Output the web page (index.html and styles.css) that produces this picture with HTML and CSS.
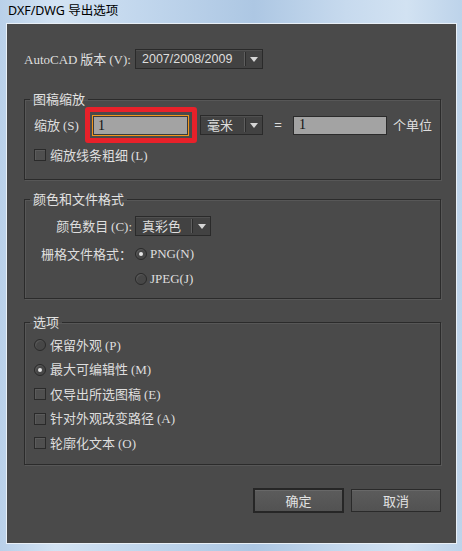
FILE: index.html
```html
<!DOCTYPE html>
<html lang="zh-CN">
<head>
<meta charset="utf-8">
<title>DXF/DWG 导出选项</title>
<link rel="stylesheet" href="styles.css">
</head>
<body>
<div class="window">
  <div class="titlebar">DXF/DWG 导出选项</div>
  <div class="frame">
    <div class="panel">
      <div class="ver-row">
        <span class="ver-label"><span class="lat">AutoCAD</span> 版本 <span class="lat">(V):</span></span>
        <div class="select w-ver"><span class="val val-ver">2007/2008/2009</span><span class="arrow"></span></div>
      </div>

      <fieldset class="group g1">
        <legend>图稿缩放</legend>
        <div class="scale-row">
          <span class="lbl-scale">缩放 <span class="lat">(S)</span></span>
          <span class="hl"><span class="input in-scale">1</span></span>
          <div class="select w-unit"><span class="val">毫米</span><span class="arrow"></span></div>
          <span class="eq">=</span>
          <span class="input in-unit">1</span>
          <span class="suffix">个单位</span>
        </div>
        <div class="opt-row first-check"><span class="box"></span><span>缩放线条粗细 <span class="lat">(L)</span></span></div>
      </fieldset>

      <fieldset class="group g2">
        <legend>颜色和文件格式</legend>
        <div class="fmt-grid">
          <span class="glabel">颜色数目 <span class="lat">(C):</span></span>
          <div class="gctl"><div class="select w-color"><span class="val">真彩色</span><span class="arrow"></span></div></div>
          <span class="glabel">栅格文件格式：</span>
          <div class="gctl"><span class="radio on"></span><span class="lat">PNG(N)</span></div>
          <span class="glabel"></span>
          <div class="gctl"><span class="radio"></span><span class="lat">JPEG(J)</span></div>
        </div>
      </fieldset>

      <fieldset class="group g3">
        <legend>选项</legend>
        <div class="opt-row"><span class="radio"></span><span>保留外观 <span class="lat">(P)</span></span></div>
        <div class="opt-row"><span class="radio on"></span><span>最大可编辑性 <span class="lat">(M)</span></span></div>
        <div class="opt-row"><span class="box"></span><span>仅导出所选图稿 <span class="lat">(E)</span></span></div>
        <div class="opt-row"><span class="box"></span><span>针对外观改变路径 <span class="lat">(A)</span></span></div>
        <div class="opt-row"><span class="box"></span><span>轮廓化文本 <span class="lat">(O)</span></span></div>
      </fieldset>

      <div class="buttons">
        <span class="btn btn-default">确定</span>
        <span class="btn">取消</span>
      </div>
    </div>
  </div>
</div>
</body>
</html>
```

FILE: styles.css
```css
* { box-sizing: border-box; }
html, body { margin: 0; padding: 0; }
body { font-family: "Noto Sans CJK SC", sans-serif; background: #c3d7ed; }

.window {
  width: 462px;
  height: 551px;
  display: flex;
  flex-direction: column;
  background: linear-gradient(90deg, #b9d0e9 0%, #d3e3f3 12%, #c2d7ed 30%, #adc7e3 55%, #c7daee 75%, #d2e2f2 88%, #bdd3ea 100%);
}

.titlebar {
  height: 23px;
  padding-left: 8px;
  font-family: "Noto Sans", "Noto Sans CJK SC", sans-serif;
  font-size: 12.5px;
  line-height: 22px;
  color: #000;
}

.frame {
  flex: 1;
  display: flex;
  padding: 0 5px 7px 6px;
}

.panel {
  flex: 1;
  background: #4a4a4a;
  border: 1px solid #e9f0f7;
  padding: 25px 15px 0 17px;
  color: #dedede;
  font-size: 13px;
  line-height: 16px;
}

.lat {
  font-family: "Liberation Serif", serif;
  font-size: 13px;
  letter-spacing: 0;
}

/* version row */
.ver-row {
  display: flex;
  align-items: center;
  height: 20px;
}
.ver-label { width: 111px; white-space: nowrap; }

/* select */
.select {
  display: flex;
  align-items: center;
  height: 20px;
  border: 1px solid #2a2a2a;
  background: #424242;
  box-shadow: inset 0 1px 0 #505050;
  color: #dedede;
}
.select .val {
  flex: 1;
  padding-left: 6px;
  white-space: nowrap;
}
.val-ver {
  font-family: "Liberation Sans", sans-serif;
  font-size: 12.5px;
}
.arrow {
  width: 17px;
  height: 14px;
  border-left: 1px solid #2c2c2c;
  box-shadow: -1px 0 0 #5e5e5e;
  display: flex;
  align-items: center;
  justify-content: center;
}
.arrow::after {
  content: "";
  border-left: 4px solid transparent;
  border-right: 4px solid transparent;
  border-top: 5px solid #d6d6d6;
}
.w-ver { width: 128px; }
.w-unit { width: 63px; margin-left: 3px; }
.w-color { width: 76px; }
.w-color .arrow { width: 18px; }

/* groups */
.group {
  margin: 0;
  min-width: 0;
  border: 1px solid #2b2b2b;
  box-shadow: 1px 1px 0 #575757, inset 1px 1px 0 #575757;
  padding: 0 0 0 9px;
  width: 417px;
}
.group legend {
  padding: 0 3px;
  margin-left: -4px;
  line-height: 16px;
  color: #e2e2e2;
}
.g1 { margin-top: 22px; padding-bottom: 15px; }
.g2 { margin-top: 11px; padding-bottom: 10px; }
.g3 { margin-top: 15px; padding-top: 3px; padding-bottom: 8.5px; }

.scale-row {
  display: flex;
  align-items: center;
  height: 36px;
}
.lbl-scale { width: 51px; white-space: nowrap; }

.hl {
  display: flex;
  border: 5px solid #e8212a;
  border-radius: 3px;
  padding: 3px 3px 2px 2px;
}

.input {
  display: flex;
  align-items: center;
  background: #a3a3a3;
  color: #111;
  font-family: "Liberation Serif", serif;
  font-size: 14px;
  padding-left: 5px;
}
.in-scale {
  width: 97px;
  height: 21px;
  border: 1px solid #f0961c;
  box-shadow: inset 0 0 0 1px #3a3a3a;
}
.in-unit {
  width: 94px;
  height: 19px;
  border: 1px solid #2b2b2b;
}
.eq {
  width: 30px;
  text-align: center;
  font-family: "Liberation Sans", sans-serif;
}
.suffix { margin-left: 6px; white-space: nowrap; }

/* option rows */
.opt-row {
  display: flex;
  align-items: center;
  height: 24.5px;
  white-space: nowrap;
}
.first-check { height: 18px; margin-top: 3px; }

.box {
  width: 12px;
  height: 12px;
  margin-right: 4px;
  border: 1px solid #2a2a2a;
  background: #4f4f4f;
  box-shadow: inset 1px 1px 0 #5c5c5c;
}
.radio {
  width: 12px;
  height: 12px;
  margin-right: 4px;
  border-radius: 50%;
  border: 1px solid #2a2a2a;
  background: #474747;
  box-shadow: inset 1px 1px 1px #5a5a5a;
  display: flex;
  align-items: center;
  justify-content: center;
}
.radio.on::after {
  content: "";
  width: 4px;
  height: 4px;
  border-radius: 50%;
  background: #e6e6e6;
}

/* format grid */
.fmt-grid {
  display: grid;
  grid-template-columns: 98px auto;
  grid-template-rows: 24px 18px 18px;
  column-gap: 3px;
  row-gap: 7px;
  margin-top: 7px;
}
.glabel {
  text-align: right;
  align-self: center;
  white-space: nowrap;
}
.gctl {
  display: flex;
  align-items: center;
}
.gctl .radio { margin-right: 3px; }

/* buttons */
.buttons {
  display: flex;
  justify-content: flex-end;
  align-items: center;
  gap: 7px;
  margin-top: 23px;
  height: 25px;
}
.btn {
  width: 90px;
  height: 23px;
  display: flex;
  align-items: center;
  justify-content: center;
  background: linear-gradient(#5c5c5c, #525252);
  border: 1px solid #2a2a2a;
  box-shadow: inset 0 1px 0 #686868;
  color: #e2e2e2;
}
.btn-default {
  width: 91px;
  height: 25px;
  border: 2px solid #262626;
}
```
